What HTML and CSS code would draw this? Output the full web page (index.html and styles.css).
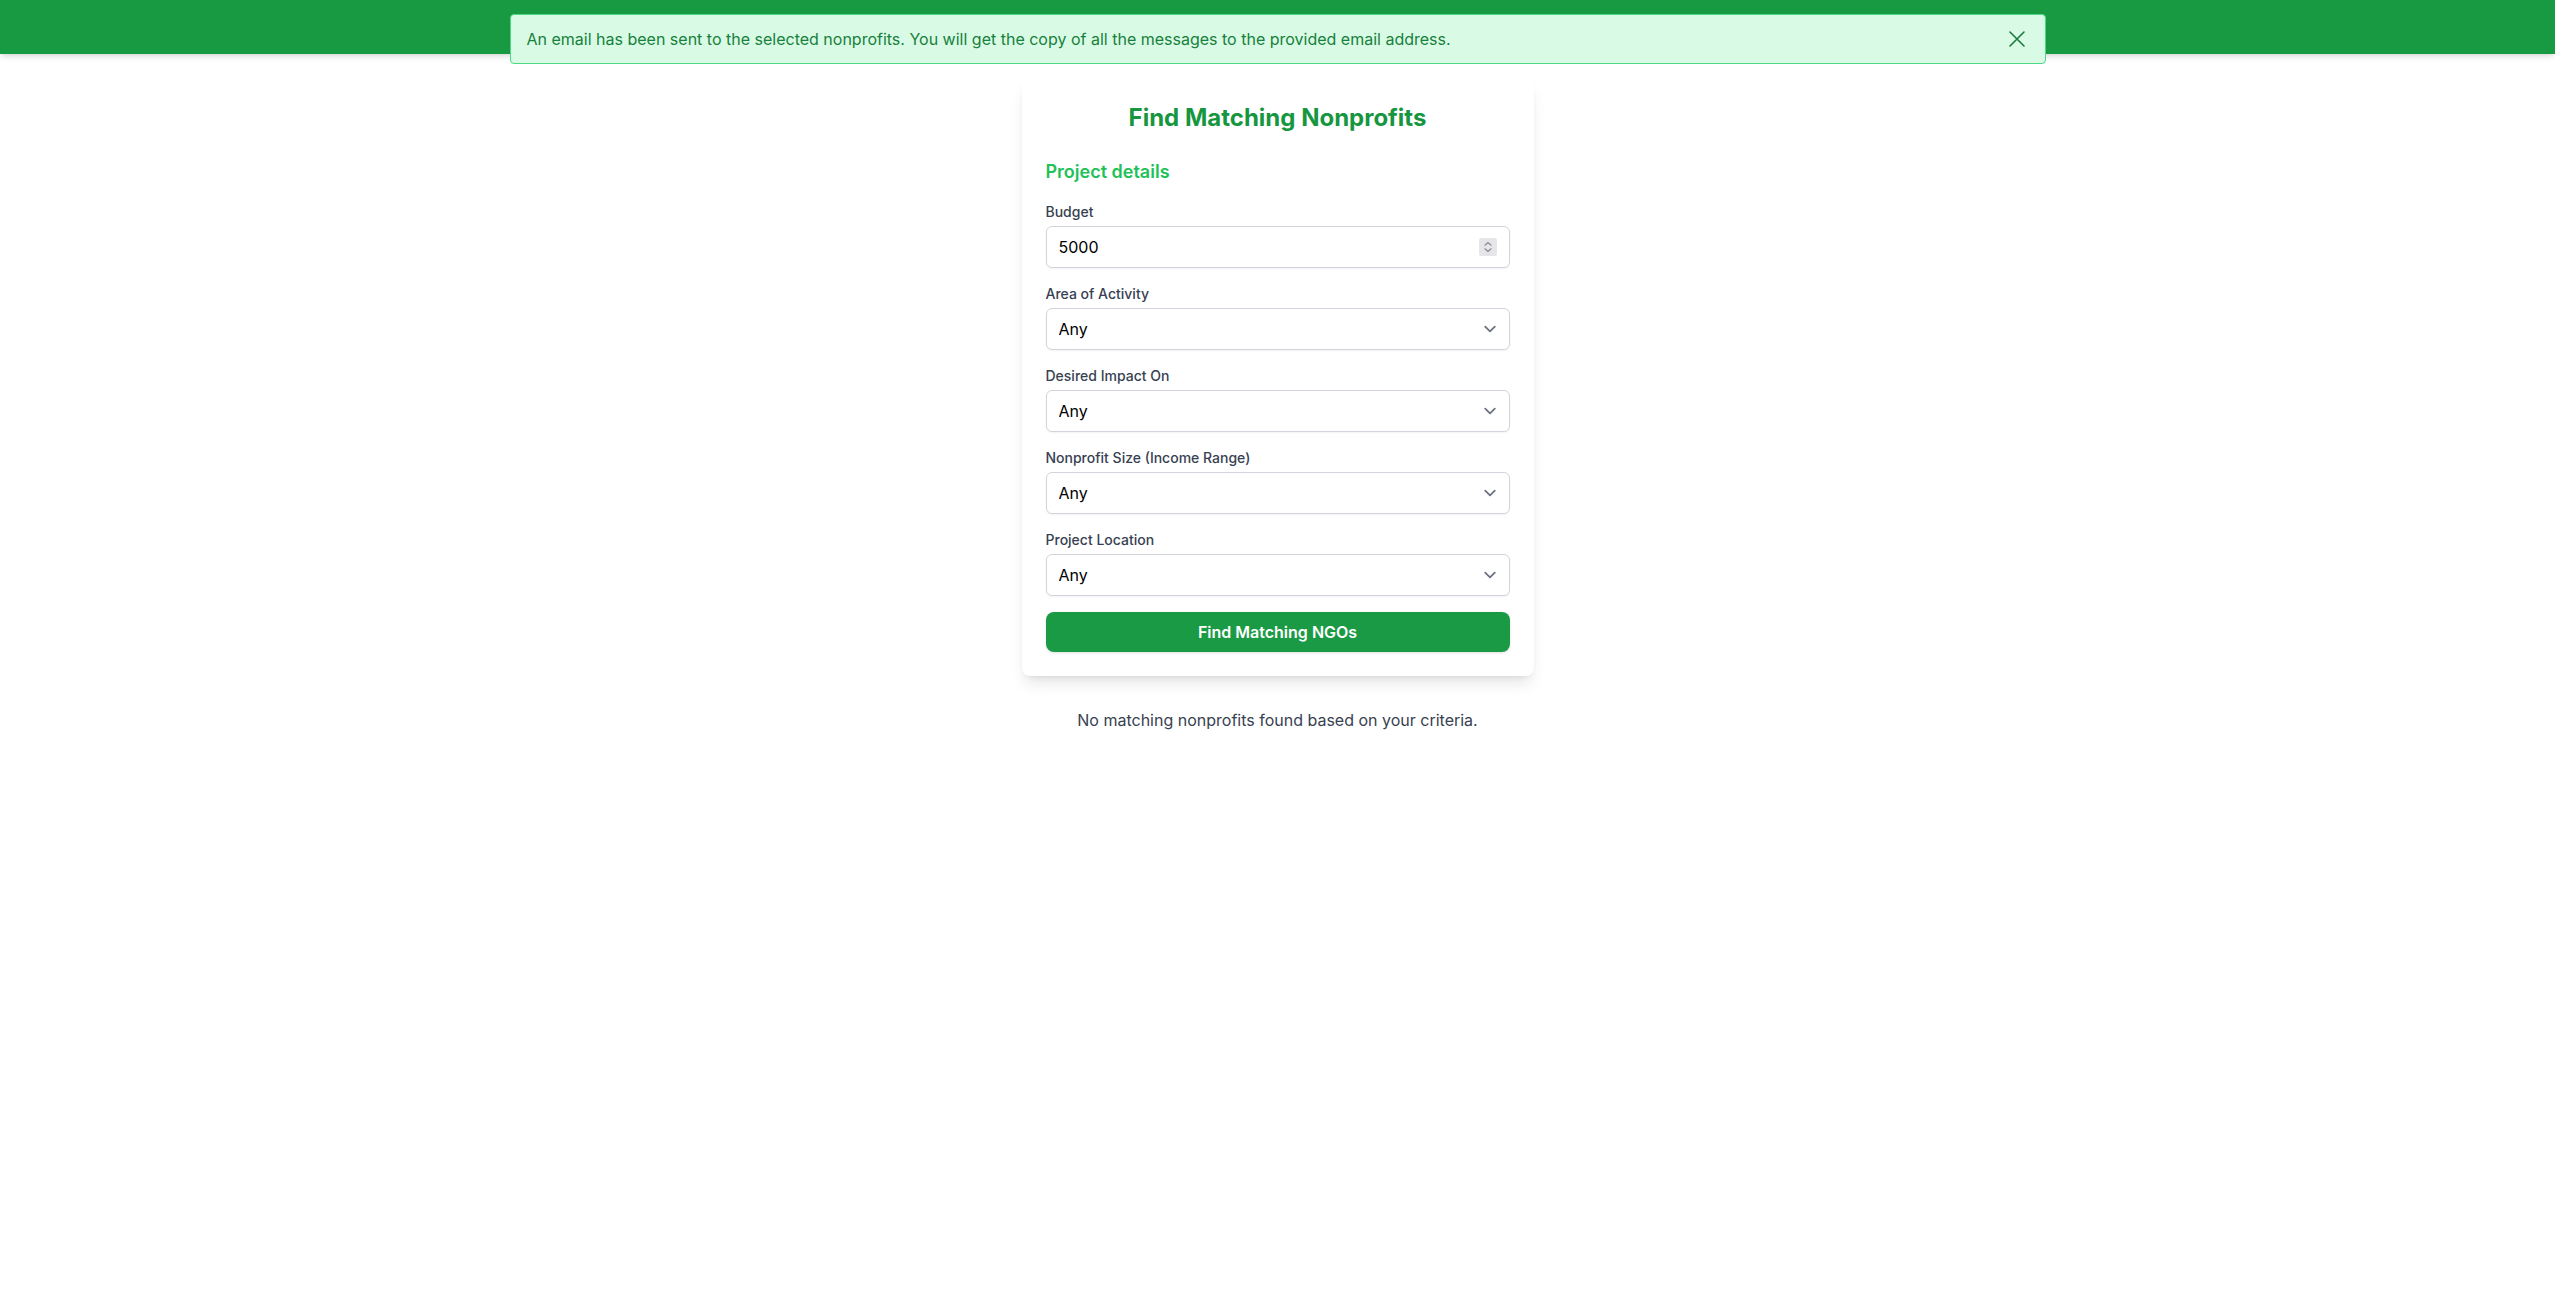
FILE: index.html
```html
<!DOCTYPE html>
<html lang="en">
<head>
<meta charset="utf-8">
<title>Find Matching Nonprofits</title>
<link rel="stylesheet" href="styles.css">
</head>
<body>
<header class="topbar"></header>

<div class="alert" role="alert">
  <span class="alert-text">An email has been sent to the selected nonprofits. You will get the copy of all the messages to the provided email address.</span>
  <button class="alert-close" type="button" aria-label="Close">
    <svg viewBox="0 0 24 24" width="24" height="24" fill="none" stroke="currentColor" stroke-width="1.6" stroke-linecap="round"><path d="M5 5L19 19M19 5L5 19"/></svg>
  </button>
</div>

<main class="page">
  <section class="card">
    <h2 class="card-title">Find Matching Nonprofits</h2>
    <h3 class="section-title">Project details</h3>
    <form class="fields">
      <div class="field">
        <label class="label">Budget</label>
        <div class="control">
          <input class="input" type="text" value="5000">
          <span class="spinner">
            <svg viewBox="0 0 18 18" width="18" height="18"><rect x="0" y="0" width="18" height="18" rx="2" fill="#e5e5ea"/><path d="M6 7.2L9 4.5L12 7.2M6 10.8L9 13.5L12 10.8" fill="none" stroke="#8c8c93" stroke-width="1.2" stroke-linecap="round" stroke-linejoin="round"/></svg>
          </span>
        </div>
      </div>
      <div class="field">
        <label class="label">Area of Activity</label>
        <div class="control">
          <select class="input select"><option>Any</option></select>
          <svg class="chevron" viewBox="0 0 20 20" width="24" height="24" fill="none"><path d="M6 8l4 4 4-4" stroke="#6b7280" stroke-width="1.5" stroke-linecap="round" stroke-linejoin="round"/></svg>
        </div>
      </div>
      <div class="field">
        <label class="label">Desired Impact On</label>
        <div class="control">
          <select class="input select"><option>Any</option></select>
          <svg class="chevron" viewBox="0 0 20 20" width="24" height="24" fill="none"><path d="M6 8l4 4 4-4" stroke="#6b7280" stroke-width="1.5" stroke-linecap="round" stroke-linejoin="round"/></svg>
        </div>
      </div>
      <div class="field">
        <label class="label">Nonprofit Size (Income Range)</label>
        <div class="control">
          <select class="input select"><option>Any</option></select>
          <svg class="chevron" viewBox="0 0 20 20" width="24" height="24" fill="none"><path d="M6 8l4 4 4-4" stroke="#6b7280" stroke-width="1.5" stroke-linecap="round" stroke-linejoin="round"/></svg>
        </div>
      </div>
      <div class="field">
        <label class="label">Project Location</label>
        <div class="control">
          <select class="input select"><option>Any</option></select>
          <svg class="chevron" viewBox="0 0 20 20" width="24" height="24" fill="none"><path d="M6 8l4 4 4-4" stroke="#6b7280" stroke-width="1.5" stroke-linecap="round" stroke-linejoin="round"/></svg>
        </div>
      </div>
      <button class="submit" type="button">Find Matching NGOs</button>
    </form>
  </section>
  <p class="empty">No matching nonprofits found based on your criteria.</p>
</main>
</body>
</html>
```

FILE: styles.css
```css
* { box-sizing: border-box; }

html, body {
  margin: 0;
  padding: 0;
  background: #ffffff;
  font-family: Inter, "Noto Sans", "Liberation Sans", sans-serif;
  color: #111827;
}

.topbar {
  height: 54px;
  background: #179a42;
  box-shadow: 0 4px 6px -1px rgba(0,0,0,0.10), 0 2px 4px -2px rgba(0,0,0,0.10);
}

.alert {
  position: fixed;
  top: 14px;
  left: 50%;
  transform: translateX(-50%);
  width: 1536px;
  display: flex;
  align-items: center;
  justify-content: space-between;
  padding: 12px 16px;
  background: #d9fbe5;
  border: 1px solid #4fd786;
  border-radius: 4px;
  color: #17803c;
  font-size: 16px;
  line-height: 23px;
  z-index: 10;
}

.alert-close {
  display: flex;
  align-items: center;
  justify-content: center;
  width: 24px;
  height: 24px;
  padding: 0;
  border: 0;
  background: transparent;
  color: #1d7a3c;
  cursor: pointer;
}

.page {
  display: flex;
  flex-direction: column;
  align-items: center;
  padding-top: 24px;
}

.card {
  width: 512px;
  padding: 24px;
  background: #ffffff;
  border-radius: 8px;
  box-shadow: 0 10px 15px -3px rgba(0,0,0,0.10), 0 4px 6px -4px rgba(0,0,0,0.10);
}

.card-title {
  margin: 0 0 24px;
  text-align: center;
  font-size: 24px;
  line-height: 32px;
  font-weight: 700;
  color: #16963f;
}

.section-title {
  margin: 0 0 16px;
  font-size: 18px;
  line-height: 28px;
  font-weight: 600;
  color: #22c158;
}

.fields {
  display: flex;
  flex-direction: column;
  gap: 16px;
  margin: 0;
}

.label {
  display: block;
  margin-bottom: 4px;
  font-size: 14px;
  line-height: 20px;
  font-weight: 500;
  color: #374151;
}

.control {
  position: relative;
}

.input {
  display: block;
  width: 100%;
  height: 42px;
  padding: 8px 12px;
  border: 1px solid #d1d5db;
  border-radius: 6px;
  background: #ffffff;
  font-family: inherit;
  font-size: 16px;
  line-height: 24px;
  color: #000000;
  box-shadow: 0 1px 2px 0 rgba(0,0,0,0.05);
  outline: none;
}

.select {
  appearance: none;
  -webkit-appearance: none;
  padding-right: 40px;
}

.chevron {
  position: absolute;
  right: 8px;
  top: 50%;
  transform: translateY(-50%);
  pointer-events: none;
}

.spinner {
  position: absolute;
  right: 13px;
  top: 50%;
  transform: translateY(-50%);
  width: 18px;
  height: 18px;
  display: block;
  line-height: 0;
}

.submit {
  display: block;
  width: 100%;
  height: 40px;
  padding: 8px 16px;
  border: 0;
  border-radius: 8px;
  background: #1a9a45;
  color: #ffffff;
  font-family: inherit;
  font-size: 16px;
  line-height: 24px;
  font-weight: 600;
  box-shadow: 0 1px 3px rgba(0,0,0,0.12);
  cursor: pointer;
}

.empty {
  margin: 32px 0 0;
  font-size: 16px;
  line-height: 24px;
  color: #374151;
  text-align: center;
}
```
